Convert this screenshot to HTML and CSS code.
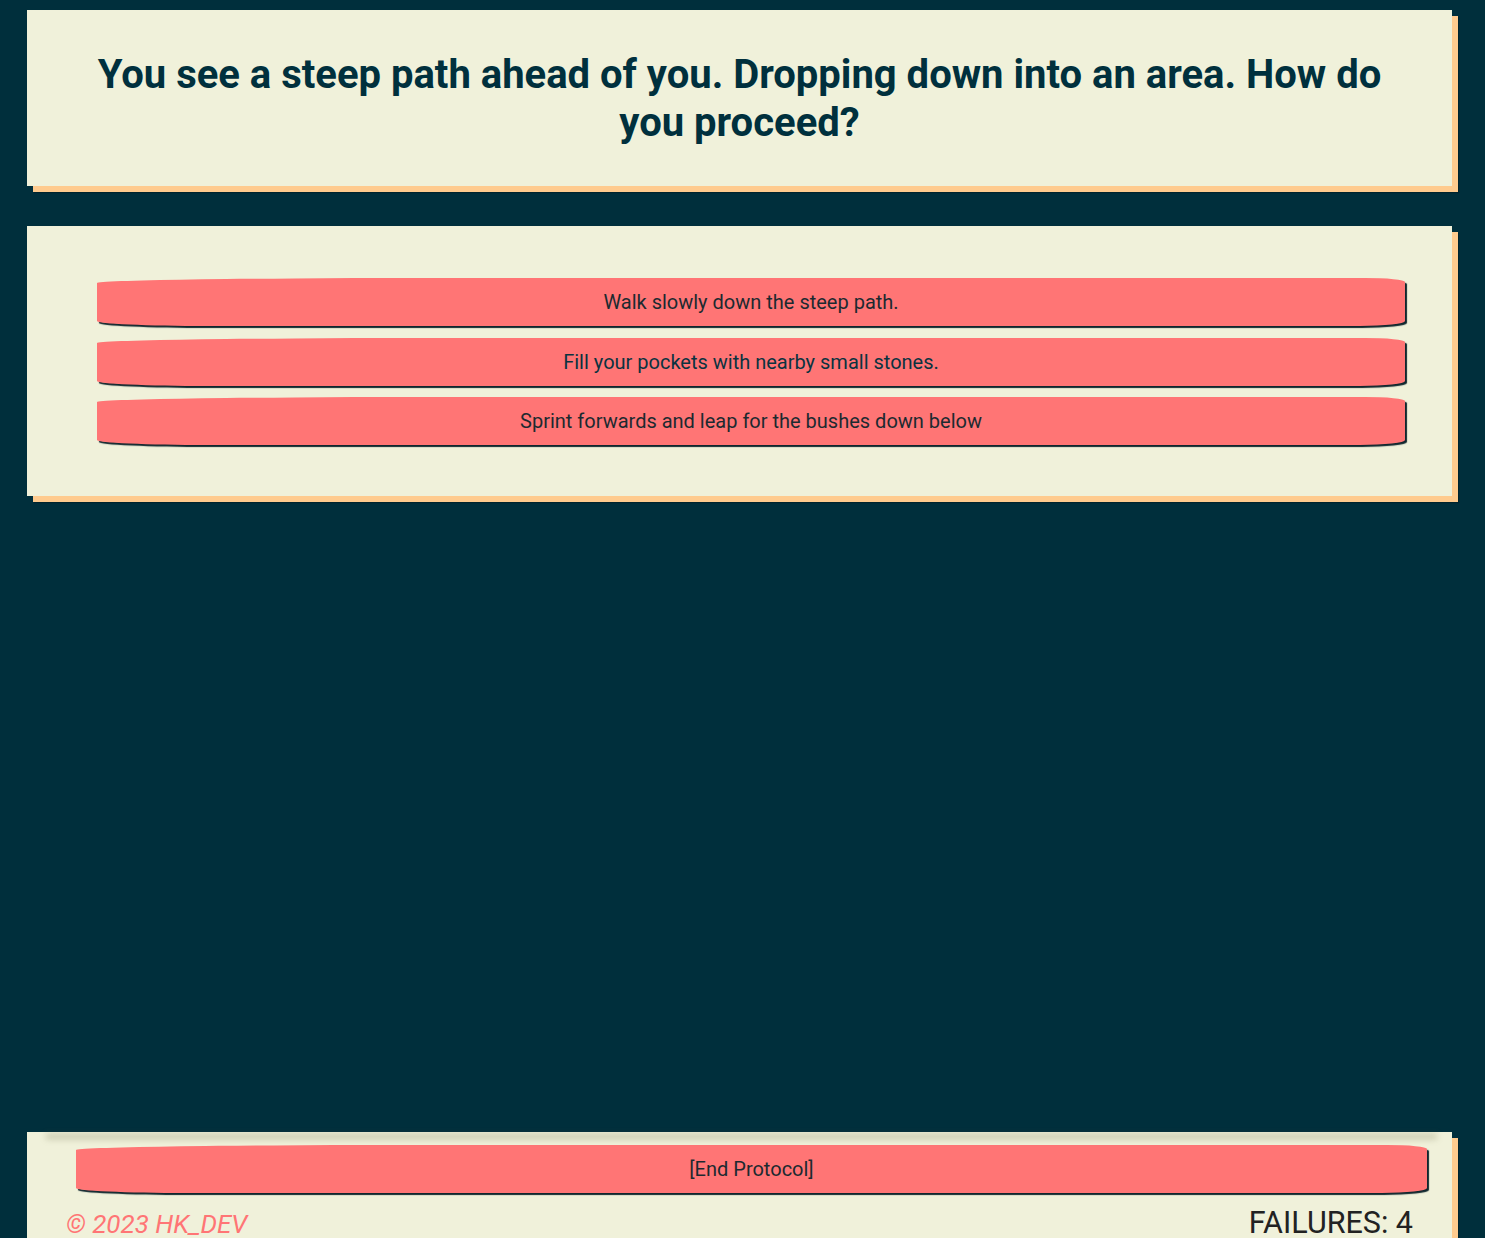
FILE: index.html
```html
<!DOCTYPE html>
<html lang="en">
<head>
<meta charset="utf-8">
<title>Adventure</title>
<link rel="stylesheet" href="styles.css">
</head>
<body>
<div class="page">
  <section class="card question-card">
    <h1 class="question">You see a steep path ahead of you. Dropping down into an area. How do you proceed?</h1>
  </section>
  <section class="card choices-card">
    <button class="choice">Walk slowly down the steep path.</button>
    <button class="choice choice-alt">Fill your pockets with nearby small stones.</button>
    <button class="choice">Sprint forwards and leap for the bushes down below</button>
  </section>
  <footer class="card footer">
    <div class="footer-rule"></div>
    <button class="choice end-btn">[End Protocol]</button>
    <div class="footer-row">
      <span class="copyright">© 2023 HK_DEV</span>
      <span class="failures">FAILURES: 4</span>
    </div>
  </footer>
</div>
</body>
</html>
```
FILE: styles.css
```css
html, body {
  margin: 0;
  height: 100%;
  overflow: hidden;
}
body {
  background: #002f3c;
  font-family: Roboto, "Liberation Sans", sans-serif;
}
.page {
  height: 100vh;
  box-sizing: border-box;
  display: flex;
  flex-direction: column;
  padding: 10px 33px 0 27px;
}
.card {
  background: #f0f1da;
  box-shadow: 6px 6px 0 #ffcb8e, 7px 7px 1px rgba(0, 0, 0, 0.25);
}
.question-card {
  padding: 41px 60px 39px;
}
.question {
  margin: 0;
  text-align: center;
  color: #00303d;
  font-size: 40px;
  font-weight: 700;
  line-height: 48px;
}
.choices-card {
  margin-top: 40px;
  padding: 52px 47px 51px 70px;
  display: flex;
  flex-direction: column;
  gap: 11.5px;
}
.choice {
  display: block;
  width: 100%;
  height: 48px;
  border: none;
  background: #ff7575;
  color: #1c2a30;
  font-family: Roboto, "Liberation Sans", sans-serif;
  font-size: 20px;
  text-align: center;
  padding: 0;
  border-radius: 320px 40px 45px 110px / 5px 4px 5px 5px;
  box-shadow: 2px 2px 1px #10272e;
}
.choice-alt {
  color: #0a3340;
}
.footer {
  margin-top: auto;
  margin-bottom: -8px;
  padding: 0 25px 6px 49px;
}
.footer-rule {
  height: 5px;
  margin: 2px -10px 0 -30px;
  background: rgba(95, 95, 60, 0.3);
  filter: blur(3px);
}
.end-btn {
  margin-top: 6px;
}
.footer-row {
  display: flex;
  justify-content: space-between;
  align-items: baseline;
  margin: 12px 14px 0 -10px;
}
.copyright {
  color: #ff7575;
  font-style: italic;
  font-size: 26px;
}
.failures {
  color: #222;
  font-size: 30.5px;
}
```
